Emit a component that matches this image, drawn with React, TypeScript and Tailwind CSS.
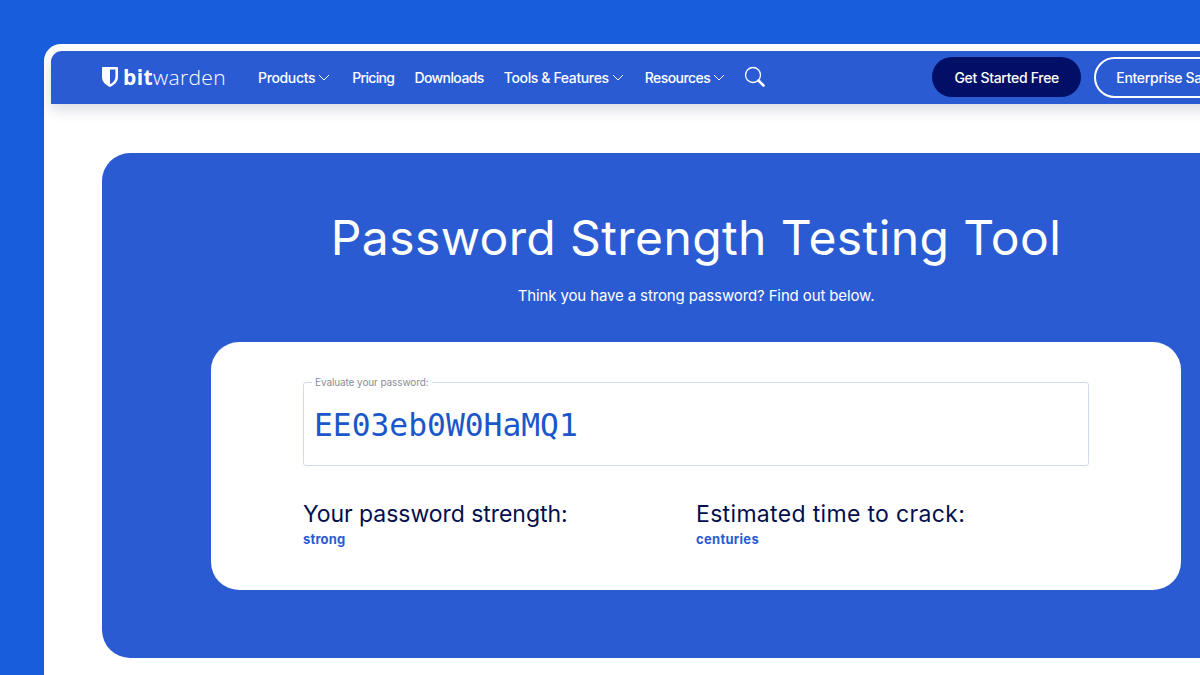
export default function App() {
  const sans = "font-['Inter','Noto_Sans',sans-serif]";
  const Chevron = () => (
    <svg width="12" height="7" viewBox="0 0 12 7" fill="none" stroke="#fff" strokeWidth="1" className="ml-[3px] mt-[1px]">
      <path d="M1 1l5 5 5-5" />
    </svg>
  );
  return (
    <div className={`w-[1200px] h-[675px] overflow-hidden bg-[#175ddc] pt-[44px] pl-[44px] ${sans}`}>
      <div className="w-[1400px] h-[700px] bg-white rounded-tl-[17px] pt-[7px] pl-[7px]">
        <nav className="w-[1393px] h-[53px] bg-[#2b5bd3] rounded-tl-[11px] flex items-center pl-[51px] pb-[1px] text-white shadow-[0_6px_14px_rgba(30,40,90,0.16)]">
          <svg width="16" height="20" viewBox="0 0 16 20" className="mr-[5px]">
            <path fillRule="evenodd" fill="#fff" d="M1 0h14a1 1 0 0 1 1 1v9c0 5-4 8-8 10-4-2-8-5-8-10V1a1 1 0 0 1 1-1zm7 2.6v14.6c3-1.600 5.400-3.800 5.400-7.200V2.600z" />
          </svg>
          <span className="font-['Open_Sans',sans-serif] text-[21px] leading-none w-[109px] tracking-[0.35px]"><span className="font-bold">bit</span><span className="font-light">warden</span></span>
          <div className="ml-[26px] flex items-center text-[14px] font-medium">
            <span className="tracking-[-0.35px]">Products</span><Chevron />
            <span className="ml-[22px] tracking-[-0.65px]">Pricing</span>
            <span className="ml-[20px] tracking-[-0.58px]">Downloads</span>
            <span className="ml-[20px] tracking-[-0.37px]">Tools &amp; Features</span><Chevron />
            <span className="ml-[21px] tracking-[-0.55px]">Resources</span><Chevron />
            <svg width="22" height="22" viewBox="0 0 22 22" fill="none" stroke="#fff" className="ml-[19px]">
              <circle cx="9" cy="9" r="7.500" strokeWidth="1.300" />
              <path d="M14.500 14.500l5 5" strokeWidth="2.600" strokeLinecap="round" />
            </svg>
          </div>
          <button className="ml-[166px] w-[149px] h-[40px] rounded-full bg-[#020f66] text-[14px] font-medium tracking-[-0.3px] text-white">Get Started Free</button>
          <button className="ml-[13px] w-[180px] h-[41px] rounded-full border-2 border-white text-left pl-[20px] text-[14px] font-medium tracking-[-0.3px] text-white">Enterprise Sales</button>
        </nav>
        <main className="mt-[49px] ml-[51px] w-[1188px] h-[505px] bg-[#2b5bd3] rounded-[28px] flex flex-col items-center text-white">
          <h1 className="mt-[54px] text-[48px] leading-[62px] font-normal tracking-[0.4px]">Password Strength Testing Tool</h1>
          <p className="mt-[16px] text-[15px] leading-[22px] tracking-[-0.12px]">Think you have a strong password? Find out below.</p>
          <section className="mt-[35px] w-[970px] h-[248px] bg-white rounded-[28px] pt-[35px] px-[92px] text-[#020f4d]">
            <fieldset className="h-[89px] border border-[#d3d9ef] rounded-[3px] px-[8px]">
              <legend className="px-[3px] text-[10px] leading-[10px] tracking-[-0.1px] text-[#8a8d99]">Evaluate your password:</legend>
              <div className="mt-[15px] pl-[2px] font-['DejaVu_Sans_Mono',monospace] text-[31.300px] leading-[46px] text-[#1a57c9]">EE03eb0W0HaMQ1</div>
            </fieldset>
            <div className="mt-[32px] flex">
              <div className="w-[393px]">
                <div className="text-[23px] leading-[33px] tracking-[-0.05px]">Your password strength:</div>
                <div className="text-[13px] leading-[16px] font-bold tracking-[0.2px] text-[#2b5bd3]">strong</div>
              </div>
              <div>
                <div className="text-[23px] leading-[33px] tracking-[0.33px]">Estimated time to crack:</div>
                <div className="text-[13px] leading-[16px] font-bold tracking-[0.3px] text-[#2b5bd3]">centuries</div>
              </div>
            </div>
          </section>
        </main>
      </div>
    </div>
  );
}
